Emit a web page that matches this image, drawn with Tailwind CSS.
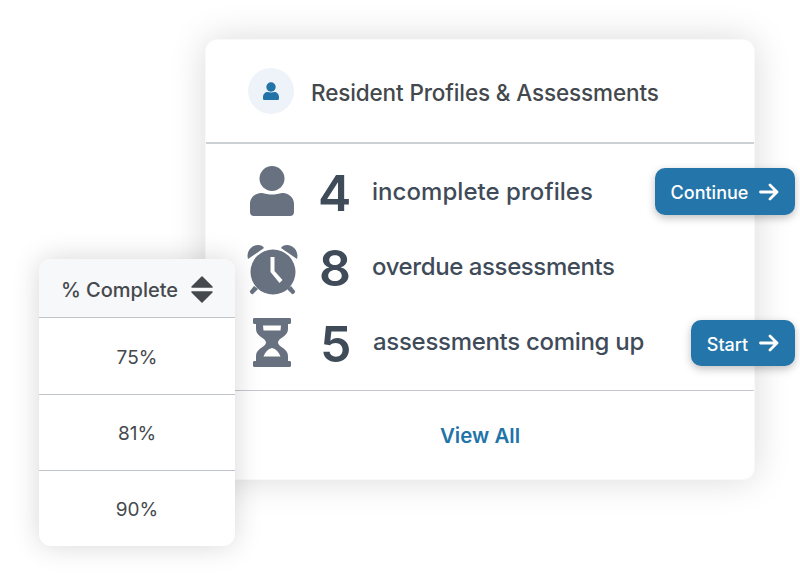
<!DOCTYPE html>
<html lang="en">
<head>
<meta charset="UTF-8">
<script src="https://cdn.jsdelivr.net/npm/@tailwindcss/browser@4"></script>
<title>Resident Profiles</title>
</head>
<body class="bg-white">
<div class="relative w-[800px] h-[586px] overflow-hidden bg-white font-['Inter',sans-serif]">

  <!-- main card -->
  <div class="absolute left-[205px] top-[39px] w-[550px] h-[441px] flex flex-col bg-white rounded-[12px] border border-[#f9f9f9] shadow-[0_0_36px_rgba(0,0,0,0.15)]">
    <div class="h-[104px] flex items-center pl-[42px] gap-[17px] border-b-2 border-[#ccd1d6]">
      <div class="w-[46px] h-[46px] rounded-full bg-[#edf3f8] flex items-center justify-center">
        <svg width="18" height="19" viewBox="0 0 18 19" fill="#2274a8"><circle cx="9" cy="5" r="4.700"/><path d="M1 15c0-3 2.400-5 4.500-5 1.200 0 2.200.5 3.500.5s2.300-.5 3.500-.5c2.100 0 4.500 2 4.500 5v1.500c0 1-.7 1.500-1.500 1.500h-13c-.8 0-1.500-.5-1.500-1.500z"/></svg>
      </div>
      <span class="pt-[3px] text-[22.500px] font-medium tracking-[-0.13px] text-[#43484d]">Resident Profiles &amp; Assessments</span>
    </div>
    <div class="h-[247px] flex flex-col border-b border-[#c4c8cc] text-[#3f4b59] pt-[9px]">
      <div class="h-[76px] flex items-center pl-[44px]">
        <svg class="w-[44px] h-[50px]" viewBox="0 0 44 50" fill="#67717f"><circle cx="22" cy="12.500" r="12.500"/><path d="M0 38c0-7 6-11 11-11 3 0 5 1.500 11 1.500S30 27 33 27c5 0 11 4 11 11v8c0 2.500-1.500 4-4 4H4c-2.500 0-4-1.500-4-4z"/></svg>
        <span class="ml-[24px] w-[54px] pt-[4px] text-[50px] font-semibold leading-none">4</span>
        <span class="pt-[2px] text-[24px] font-medium tracking-[0.05px] text-[#3f4b59]">incomplete profiles</span>
      </div>
      <div class="h-[73px] flex items-center pl-[41px]">
        <svg class="mt-[10px] w-[51px] h-[51px]" viewBox="0 0 51 51" fill="#67717f"><path d="M1 14C-1 7 4 0 11 0c3 0 5 1 6 3zM50 14c2-7-3-14-10-14-3 0-5 1-6 3z"/><circle cx="26" cy="27" r="22.500"/><path d="M7 41l-4 5c-1 1 2 4 3 3l5-5zM44 41l4 5c1 1-2 4-3 3l-5-5z"/><path d="M23.500 12h4v14l8 9-3 3-9-11z" fill="#fff"/></svg>
        <span class="ml-[21px] w-[53px] pt-[4px] text-[50px] font-semibold leading-none">8</span>
        <span class="pt-[2px] text-[24px] font-medium tracking-[-0.4px] text-[#3f4b59]">overdue assessments</span>
      </div>
      <div class="h-[76px] flex items-center pl-[47px]">
        <svg class="mt-[4px] w-[38px] h-[49px]" viewBox="0 0 38 49" fill="#67717f"><path d="M1.500 0h35c1 0 1.500.7 1.500 1.500v3c0 .8-.5 1.500-1.500 1.500H35v5c0 8-10 9-10 13.500 0 4.500 10 5.500 10 13.500v5h1.500c1 0 1.500.7 1.500 1.500v3c0 .8-.5 1.500-1.500 1.500h-35C.5 49 0 48.300 0 47.500v-3C0 43.700.5 43 1.500 43H3v-5c0-8 10-9 10-13.500C13 20 3 19 3 11V6H1.500C.5 6 0 5.300 0 4.500v-3C0 .7.5 0 1.500 0z"/><path d="M10 7.500h18l-.5 5h-17zM19 30c4 1 7 4 8.500 8.500h-17C12 34 15 31 19 30z" fill="#fff"/></svg>
        <span class="ml-[29px] w-[53px] pt-[8px] text-[50px] font-semibold leading-none">5</span>
        <span class="pt-[4px] text-[24px] font-medium tracking-[-0.3px] text-[#3f4b59]">assessments coming up</span>
      </div>
    </div>
    <div class="flex-1 flex items-center justify-center pt-[3px] text-[20.500px] font-semibold text-[#2274a8]">View All</div>
  </div>

  <!-- buttons over card edge -->
  <button class="absolute left-[655px] top-[168px] w-[140px] h-[47px] flex items-center justify-center gap-[11px] rounded-[10px] bg-[#2475a9] text-white text-[18px] font-medium shadow-[0_3px_8px_rgba(0,0,0,0.25)]"><span class="pt-[2px]">Continue</span>
    <svg width="20" height="18" viewBox="0 0 20 18" fill="none" stroke="#fff" stroke-width="2.800" stroke-linecap="round" stroke-linejoin="round"><path d="M1.500 9h16.500M11 2l7 7-7 7"/></svg>
  </button>
  <button class="absolute left-[691px] top-[320px] w-[104px] h-[46px] flex items-center justify-center gap-[11px] rounded-[10px] bg-[#2475a9] text-white text-[18px] font-medium shadow-[0_3px_8px_rgba(0,0,0,0.25)]"><span class="pt-[2px]">Start</span>
    <svg width="20" height="18" viewBox="0 0 20 18" fill="none" stroke="#fff" stroke-width="2.800" stroke-linecap="round" stroke-linejoin="round"><path d="M1.500 9h16.500M11 2l7 7-7 7"/></svg>
  </button>

  <!-- table card -->
  <div class="absolute left-[39px] top-[259px] w-[196px] h-[287px] flex flex-col bg-white rounded-[12px] overflow-hidden text-[19px] text-[#45494d] shadow-[0_0_28px_rgba(0,0,0,0.16)]">
    <div class="h-[59px] flex items-center justify-center gap-[13px] bg-[#f7f8fa] border-b border-[#bfc4cb] text-[20px] font-medium">
      <span class="pt-[4px]">% Complete</span>
      <svg class="mt-[2px]" width="22" height="27" viewBox="0 0 22 27" fill="#45494d" stroke="#45494d" stroke-width="1.500" stroke-linejoin="round"><path d="M11 1l10 10H1zM11 26L1 16h20z"/></svg>
    </div>
    <div class="h-[77px] pt-[4px] flex items-center justify-center border-b border-[#bfc4cb]">75%</div>
    <div class="h-[76px] pt-[4px] flex items-center justify-center border-b border-[#bfc4cb]">81%</div>
    <div class="flex-1 pt-[3px] flex items-center justify-center">90%</div>
  </div>
</div>
</body>
</html>
